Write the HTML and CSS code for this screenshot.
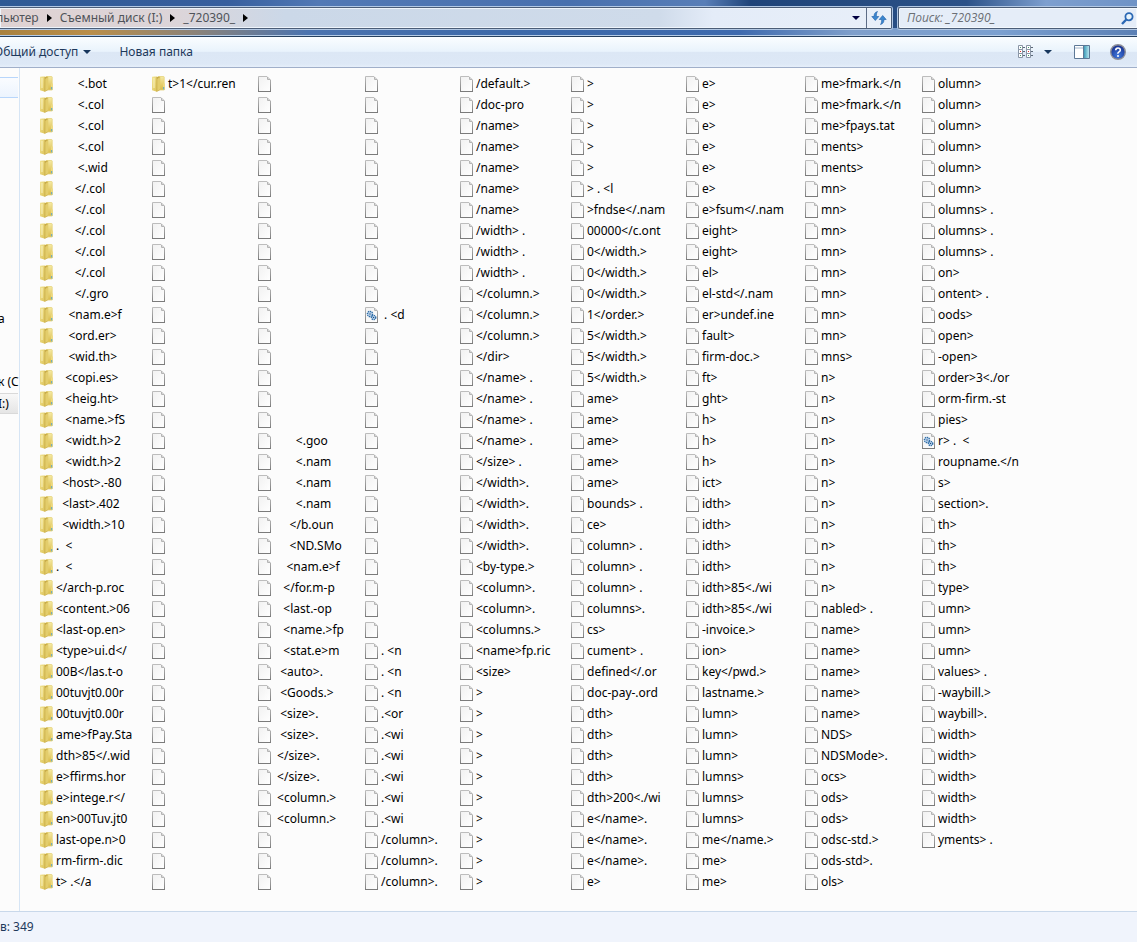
FILE: index.html
```html
<!DOCTYPE html>
<html lang="ru">
<head>
<meta charset="utf-8">
<title>_720390_</title>
<link rel="stylesheet" href="styles.css">
</head>
<body>
<svg class="sprite" aria-hidden="true">
  <defs>
    <linearGradient id="paper" x1="0" y1="0" x2="1" y2="1"><stop offset="0" stop-color="#f1f1f1"/><stop offset="1" stop-color="#fff"/></linearGradient>
    <linearGradient id="edge" x1="0" y1="0" x2="0" y2="1"><stop offset="0" stop-color="#bdbdbd"/><stop offset="1" stop-color="#7e7e7e"/></linearGradient>
    <linearGradient id="gold" x1="0" y1="0" x2="1" y2="1"><stop offset="0" stop-color="#f2e596"/><stop offset="1" stop-color="#dcc257"/></linearGradient>
    <linearGradient id="gold2" x1="0" y1="0" x2="0" y2="1"><stop offset="0" stop-color="#f5eaa3"/><stop offset="1" stop-color="#d9ba48"/></linearGradient>
    <linearGradient id="pane" x1="0" y1="0" x2="1" y2="0"><stop offset="0" stop-color="#3f9cb8"/><stop offset="1" stop-color="#b5e3ee"/></linearGradient>
    <radialGradient id="ball" cx=".5" cy=".75" r=".7"><stop offset="0" stop-color="#3f78dc"/><stop offset="1" stop-color="#17308f"/></radialGradient>
  </defs>
  <symbol id="file" viewBox="0 0 13 16">
    <path d="M.5.5H9L12.5 4V15.5H.5Z" fill="url(#paper)" stroke="url(#edge)"/>
    <path d="M9.5 1V3.5H12" fill="none" stroke="#b4b4b4"/>
    <path d="M0 15.5H13" stroke="#7b7b7b"/>
  </symbol>
  <symbol id="config" viewBox="0 0 13 16">
    <use href="#file"/>
    <circle cx="5" cy="7" r="2.5" fill="#d8eafa" stroke="#2f6da8" stroke-width="1.6" stroke-dasharray="1.3 .6"/>
    <circle cx="8.6" cy="10.5" r="2.1" fill="#d8eafa" stroke="#2f6da8" stroke-width="1.5" stroke-dasharray="1.2 .6"/>
    <circle cx="5" cy="7" r=".8" fill="#1c4d86"/><circle cx="8.6" cy="10.5" r=".7" fill="#1c4d86"/>
  </symbol>
  <symbol id="folder" viewBox="0 0 13 16">
    <path d="M6 .5H11.500Q12.200.5 12.200 1.200V14H6Z" fill="url(#gold2)" stroke="#e6d37c" stroke-width=".8"/>
    <path d="M0 .8Q2 .2 5 .6V15.700L0 14.300Z" fill="url(#gold)"/>
    <path d="M4.500 1 8 .8V14L5 15.800H4.500Z" fill="#c8ab49"/>
    <path d="M5.300 3Q7 1.500 8.300 1V13.200L5.300 15Z" fill="#e3cd6c"/>
    <path d="M2 2V12" stroke="#f9f2c0" stroke-width="1"/>
    <path d="M11 7.500H12.800V14H11Z" fill="#ecd97e"/><path d="M11.700 11V13.500" stroke="#5aa4c4"/>
  </symbol>
</svg>
<div class="window">
  <header class="glass">
    <nav class="address" aria-label="Адрес">
      <a href="#" class="cut">пьютер</a><i class="chev"></i>
      <a href="#">Съемный диск (I:)</a><i class="chev"></i>
      <a href="#">_720390_</a><i class="chev"></i>
      <button class="drop" aria-label="Предыдущие расположения"><i class="down"></i></button>
      <button class="refresh" aria-label="Обновить">
        <svg width="16" height="16" viewBox="0 0 16 16"><g fill="#3b86cf" stroke="#1c5ca6" stroke-width=".6"><path d="M6.500 1.500C4 2 3 4 3 6.500H.8L4.300 10.500 7.800 6.500H5.400C5.200 4.500 5.500 3 6.500 1.500Z"/><path d="M9.500 14.500C12 14 13 12 13 9.500H15.200L11.700 5.500 8.200 9.500H10.600C10.800 11.500 10.500 13 9.500 14.500Z"/></g></svg>
      </button>
    </nav>
    <label class="search">
      <input type="text" placeholder="Поиск: _720390_" aria-label="Поиск">
      <svg width="13" height="13" viewBox="0 0 13 13" fill="none" stroke="#2b68b4"><circle cx="8" cy="4.700" r="3.600" stroke-width="1.800" fill="#e8f4fc"/><path d="M5.300 7.500 1 12" stroke-width="2.400"/></svg>
    </label>
  </header>
  <div class="toolbar">
    <button class="share">Общий доступ<i class="down"></i></button>
    <button>Новая папка</button>
    <div class="tools">
      <button aria-label="Изменить представление" class="views">
        <svg width="16" height="14" viewBox="0 0 16 14"><g fill="#fff" stroke="#8995a5"><path d="M.5.5h4v4h-4zM.5 4.500h4v4h-4zM.5 8.500h4v4h-4zM8.500.5h4v4h-4zM8.500 4.500h4v4h-4zM8.500 8.500h4v4h-4z"/><path d="M5 2.500h2M5 6.500h2M5 10.500h2M13 2.500h2M13 6.500h2M13 10.500h2" stroke="#5b6877"/></g><path d="M2 2.500h1M2 10.500h1M10 2.500h1M10 10.500h1" stroke="#3a9a68"/><path d="M2 6.500h1M10 6.500h1" stroke="#d33"/></svg>
      </button>
      <button aria-label="Другие представления" class="more"><i class="down"></i></button>
      <button aria-label="Область просмотра" class="preview">
        <svg width="16" height="14" viewBox="0 0 16 14"><path d="M.5.5h15v13H.5z" fill="#fff" stroke="#5d7896"/><path d="M1 3h9" stroke="#9fb3c8"/><path d="M10 1h5v12h-5z" fill="url(#pane)"/><path d="M9.500 1v12" stroke="#5d7896"/></svg>
      </button>
      <button aria-label="Справка" class="help">
        <svg width="16" height="16" viewBox="0 0 16 16"><circle cx="8" cy="8" r="7.300" fill="url(#ball)" stroke="#8d8f98" stroke-width="1.400"/><path d="M5.700 6.300Q5.800 4 8 4T10.300 6Q10.300 7.200 9 7.900T8 9.800" fill="none" stroke="#fff" stroke-width="1.600"/><circle cx="8" cy="12" r="1" fill="#fff"/></svg>
      </button>
    </div>
  </div>
  <div class="body">
    <aside class="tree">
      <div class="node hot"></div>
      <div class="node computer">а</div>
      <div class="node disk-c">к (C</div>
      <div class="node current">I:)</div>
    </aside>
    <main class="pane"><ul class="files" id="files"></ul></main>
  </div>
  <footer class="status">в: 349</footer>
</div>
<script src="files.js"></script>
</body>
</html>
```
FILE: styles.css
```css
* { box-sizing: border-box; }
body { margin: 0; font: 12px/16px "Noto Sans", "Open Sans", sans-serif; color: #000; }
button { border: 0; padding: 0; background: none; font: inherit; color: inherit; display: flex; align-items: center; }
svg { display: block; flex: none; }
.sprite { position: absolute; width: 0; height: 0; }
.window { min-height: 100vh; display: flex; flex-direction: column; overflow: hidden; }

.glass {
  display: flex; gap: 6px; height: 37px; padding: 7px 0 8px;
  border-bottom: 1px solid #26405f;
  box-shadow: inset 0 -1px #b4cbe6;
  background:
    linear-gradient(to right, #a9823f, #b98e4a 8%, #8c8378 17%, #4c74af 27%, #3c69a9 45%, #3e6aae 65%, #7f9fcb 75%, #7ba0d0 88%, #5b80b5) 0 28px / 100% 9px no-repeat,
    linear-gradient(to right, #2e5a95, #375f9e 20%, #5279b5 28%, #4870ae 50%, #587eb7 62%, #1f4479 66%, #2c5288 85%, #7d9fcf 92%, #6f93c6);
}
.address {
  flex: 1; display: flex; align-items: center; min-width: 0; height: 22px;
  border: 1px solid #4b5d77; border-left: 0; border-radius: 0 2px 2px 0;
  box-shadow: 0 0 0 1px #b2c8e4, inset 0 0 0 1px #eef4fb;
  background: linear-gradient(to right, #dfd2d2, #dcd5d9 20%, #cbd8e8 32%, #cfdbea 74%, #e4ecf8 80%, #e8eff9);
}
.address a { color: #4f5359; text-decoration: none; white-space: nowrap; }
.address .cut { margin-left: -4px; }
.chev { border: 4px solid transparent; border-left: 5px solid #000; border-right: 0; margin: 0 8px; }
.down { border: 4px solid transparent; border-top: 4px solid #17365d; border-bottom: 0; }
.drop { margin-left: auto; height: 20px; padding: 0 6px; }
.drop .down { border-top-color: #000040; }
.refresh { height: 20px; width: 25px; justify-content: center; border-left: 1px solid #5c6c86; }
.search {
  flex: none; width: 239px; height: 22px; display: flex; align-items: center; padding: 0 3px 0 8px;
  border: 1px solid #4b5d77; border-right: 0; border-radius: 2px 0 0 2px;
  box-shadow: 0 0 0 1px #b2c8e4, inset 0 0 0 1px #f3f8fd; background: #e5edf8;
}
.search input { flex: 1; min-width: 0; border: 0; padding: 0; background: none; font: italic 12px/16px "Open Sans", "Noto Sans", sans-serif; outline: 0; }
.search input::placeholder { color: #6b6f75; opacity: 1; }

.toolbar {
  display: flex; align-items: center; height: 31px; color: #1e395b;
  border-bottom: 1px solid #a0afc9;
  background: linear-gradient(#fafdff, #e9f3fc 48%, #dce7f5 50%, #dde8f6 90%, #e6effa);
}
.share { margin: 0 28px 0 -6px; gap: 5px; }
.tools { margin-left: auto; display: flex; align-items: center; padding-right: 11px; }
.more { margin: 0 22px 0 10px; }
.preview { margin-right: 20px; }

.body { flex: 1; display: flex; background: #fcfcfc; }
.tree { flex: none; width: 20px; padding: 9px 1px 0 0; border-right: 1px solid #d6e5f5; overflow: hidden; }
.node { height: 21px; line-height: 20px; margin-left: -2px; white-space: nowrap; }
.hot { border: solid #b8d6fb; border-width: 1px 0; background: linear-gradient(#fafcff, #ecf4fe); }
.computer { margin-top: 211px; }
.disk-c { margin-top: 42px; }
.current { border: solid #d9d9d9; border-width: 1px 0; background: linear-gradient(#f8f8f8, #e5e5e5); }
.pane { flex: 1; min-width: 0; padding: 5px 0 18px 20px; }
.files {
  margin: 0; padding: 0; list-style: none; display: grid; grid-auto-flow: column;
  grid-template-rows: repeat(39, 21px);
  grid-template-columns: 112px 106px 107px 95px 111px 115px 119px 117px auto;
}
.files li { display: flex; align-items: center; gap: 3px; white-space: pre; }
.icon { width: 13px; height: 16px; }
.status { height: 31px; padding: 7px 0 0; color: #1e395b; background: #f0f4fc; border-top: 1px solid #c9d8ea; }
```
FILE: files.js
```javascript
const blanks = n => Array(n).fill("");
const times = (n, s) => Array(n).fill(s);
const pad = (n, s) => " ".repeat(n) + s;

const names = [
  pad(7, "<.bot"), ...times(3, pad(7, "<.col")), pad(7, "<.wid"),
  ...times(5, pad(6, "</.col")), pad(6, "</.gro"),
  pad(4, "<nam.e>f"), pad(4, "<ord.er>"), pad(4, "<wid.th>"),
  pad(3, "<copi.es>"), pad(3, "<heig.ht>"), pad(3, "<name.>fS"), ...times(2, pad(3, "<widt.h>2")),
  pad(2, "<host>.-80"), pad(2, "<last>.402"), pad(2, "<width.>10"),
  ".  <", ".  <", "</arch-p.roc", "<content.>06", "<last-op.en>", "<type>ui.d</",
  "00B</las.t-o", "00tuvjt0.00r", "00tuvjt0.00r", "ame>fPay.Sta", "dth>85</.wid",
  "e>ffirms.hor", "e>intege.r</", "en>00Tuv.jt0", "last-ope.n>0", "rm-firm-.dic", "t> .</a",

  "t>1</cur.ren", ...blanks(38),

  ...blanks(17), pad(7, "<.goo"), ...times(3, pad(7, "<.nam")), pad(5, "</b.oun"), pad(5, "<ND.SMo"),
  pad(4, "<nam.e>f"), pad(3, "</for.m-p"), pad(3, "<last.-op"), pad(3, "<name.>fp"), pad(3, "<stat.e>m"),
  pad(2, "<auto>."), pad(2, "<Goods.>"), ...times(2, pad(2, "<size>.")), ...times(2, pad(1, "</size>.")),
  ...times(2, pad(1, "<column.>")), ...blanks(3),

  ...blanks(11), " . <d", ...blanks(15), ...times(3, ". <n"), ".<or", ...times(5, ".<wi"), ...times(3, "/column>."),

  "/default.>", "/doc-pro", ...times(5, "/name>"), ...times(3, "/width> ."), ...times(3, "</column.>"),
  "</dir>", ...times(4, "</name> ."), "</size> .", ...times(4, "</width>."), "<by-type.>",
  ...times(2, "<column>."), "<columns.>", "<name>fp.ric", "<size>", ...times(10, ">"),

  ...times(5, ">"), "> . <l", ">fndse</.nam", "00000</c.ont", ...times(3, "0</width.>"), "1</order.>",
  ...times(3, "5</width.>"), ...times(5, "ame>"), "bounds> .", "ce>", ...times(3, "column> ."), "columns>.",
  "cs>", "cument> .", "defined</.or", "doc-pay-.ord", ...times(4, "dth>"), "dth>200<./wi",
  ...times(3, "e</name>."), "e>",

  ...times(6, "e>"), "e>fsum</.nam", ...times(2, "eight>"), "el>", "el-std</.nam", "er>undef.ine", "fault>",
  "firm-doc.>", "ft>", "ght>", ...times(3, "h>"), "ict>", ...times(4, "idth>"), ...times(2, "idth>85<./wi"),
  "-invoice.>", "ion>", "key</pwd.>", "lastname.>", ...times(3, "lumn>"), ...times(3, "lumns>"),
  "me</name.>", ...times(2, "me>"),

  ...times(2, "me>fmark.</n"), "me>fpays.tat", ...times(2, "ments>"), ...times(8, "mn>"), "mns>",
  ...times(11, "n>"), "nabled> .", ...times(5, "name>"), "NDS>", "NDSMode>.", "ocs>", ...times(2, "ods>"),
  "odsc-std.>", "ods-std>.", "ols>",

  ...times(6, "olumn>"), ...times(3, "olumns> ."), "on>", "ontent> .", "oods>", "open>", "-open>",
  "order>3<./or", "orm-firm.-st", "pies>", "r> .  <", "roupname.</n", "s>", "section>.", ...times(3, "th>"),
  "type>", ...times(3, "umn>"), "values> .", "-waybill.>", "waybill>.", ...times(5, "width>"), "yments> ."
];

const folderCount = 40;
const configFiles = new Set([" . <d", "r> .  <"]);
const list = document.getElementById("files");

names.forEach((name, i) => {
  const kind = i < folderCount ? "folder" : configFiles.has(name) ? "config" : "file";
  const item = document.createElement("li");
  item.innerHTML = `<svg class="icon" aria-hidden="true"><use href="#${kind}"/></svg>`;
  const label = document.createElement("span");
  label.textContent = name;
  item.append(label);
  list.append(item);
});
```
